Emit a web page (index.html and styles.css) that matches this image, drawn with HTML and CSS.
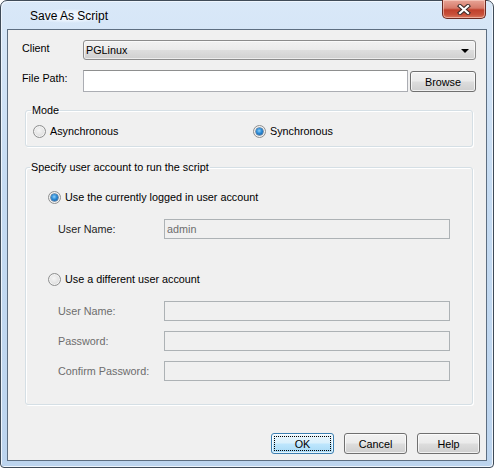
FILE: index.html
```html
<!DOCTYPE html>
<html lang="en">
<head>
    <meta charset="UTF-8">
    <title>Save As Script</title>
    <link rel="stylesheet" href="styles.css">
</head>
<body>
    <div class="window">
        <div class="titlebar">
            <span class="title">Save As Script</span>
            <button class="close-btn" aria-label="Close">
                <svg width="14" height="11" viewBox="0 0 14 11">
                    <path d="M3 2 L11 9 M11 2 L3 9" stroke="#3b2a28" stroke-width="4.2" stroke-linecap="square"/>
                    <path d="M3 2 L11 9 M11 2 L3 9" stroke="#fff" stroke-width="2.2" stroke-linecap="square"/>
                </svg>
            </button>
        </div>

        <div class="client">
            <div class="form-top">
                <label class="lbl">Client</label>
                <div class="combo">
                    <span>PGLinux</span>
                    <span class="combo-arrow"></span>
                </div>

                <label class="lbl">File Path:</label>
                <div class="path-row">
                    <input type="text" class="textbox">
                    <button class="btn browse">Browse</button>
                </div>
            </div>

            <fieldset class="group mode">
                <legend>Mode</legend>
                <div class="mode-row">
                    <label class="opt"><span class="radio"></span>Asynchronous</label>
                    <label class="opt"><span class="radio checked"></span>Synchronous</label>
                </div>
            </fieldset>

            <fieldset class="group account">
                <legend>Specify user account to run the script</legend>
                <label class="opt first"><span class="radio checked"></span>Use the currently logged in user account</label>
                <div class="field-row current">
                    <span class="flabel">User Name:</span>
                    <div class="dbox">admin</div>
                </div>

                <label class="opt second"><span class="radio"></span>Use a different user account</label>
                <div class="field-row">
                    <span class="flabel disabled">User Name:</span>
                    <div class="dbox"></div>
                </div>
                <div class="field-row">
                    <span class="flabel disabled">Password:</span>
                    <div class="dbox"></div>
                </div>
                <div class="field-row">
                    <span class="flabel disabled">Confirm Password:</span>
                    <div class="dbox"></div>
                </div>
            </fieldset>

            <div class="buttons">
                <button class="btn default"><span>OK</span></button>
                <button class="btn">Cancel</button>
                <button class="btn">Help</button>
            </div>
        </div>
    </div>
</body>
</html>
```

FILE: styles.css
```css
* {
    margin: 0;
    padding: 0;
    box-sizing: border-box;
}

body {
    width: 494px;
    height: 468px;
    background: #ffffff;
    font-family: 'Liberation Sans', Arial, sans-serif;
    font-size: 10.8px;
    color: #000;
}

/* window frame */
.window {
    width: 494px;
    height: 468px;
    border: 1px solid #3f4b58;
    border-radius: 7px 7px 4px 4px;
    background: linear-gradient(180deg, #d9e8f8 0%, #c5dbf2 40%, #bcd4ee 100%);
    box-shadow: inset 1px 1px 0 #eef5fd, inset -1px -1px 0 #eef5fd;
    display: flex;
    flex-direction: column;
}

.titlebar {
    height: 28px;
    display: flex;
    align-items: flex-start;
    padding-left: 28px;
}

.title {
    font-size: 12px;
    line-height: 14px;
    margin-top: 8px;
    color: #000;
    padding: 0 1px;
    background: radial-gradient(ellipse at center, rgba(240, 247, 255, 0.9) 40%, rgba(240, 247, 255, 0) 72%);
}

.close-btn {
    margin-left: auto;
    margin-right: 7px;
    width: 44px;
    height: 19px;
    margin-top: -1px;
    border: 1px solid #6a2b23;
    border-top: none;
    border-radius: 0 0 5px 5px;
    background: linear-gradient(180deg, #e8a597 0%, #d67a6a 45%, #c0402c 55%, #c8503a 80%, #d9785f 100%);
    box-shadow: inset 0 0 0 1px rgba(255, 220, 210, 0.55);
    display: flex;
    align-items: center;
    justify-content: center;
}

.client {
    flex: 1;
    margin: 0 6px 6px 6px;
    border: 1px solid #5d6e81;
    background: #f0f0f0;
    padding: 10px 6px 6px 14px;
    display: flex;
    flex-direction: column;
}

/* client + file path rows */
.form-top {
    display: grid;
    grid-template-columns: 61px 1fr;
    row-gap: 10px;
    margin-right: 4px;
    align-items: center;
}

.lbl {
    align-self: start;
    line-height: 14px;
    margin-top: 1px;
}

.combo {
    height: 20px;
    border: 1px solid #8c8c8c;
    border-radius: 3px;
    background: linear-gradient(180deg, #f2f2f2 0%, #ebebeb 48%, #dddddd 52%, #d0d0d0 100%);
    box-shadow: inset 0 0 0 1px rgba(255, 255, 255, 0.6);
    display: flex;
    align-items: center;
    padding: 0 6px 0 2px;
}

.combo-arrow {
    margin-left: auto;
    width: 0;
    height: 0;
    border-left: 4px solid transparent;
    border-right: 4px solid transparent;
    border-top: 4px solid #000;
    margin-top: 1px;
}

.path-row {
    display: flex;
    gap: 2px;
    height: 22px;
}

.textbox {
    flex: 1;
    height: 22px;
    border: 1px solid #abadb3;
    border-top-color: #8e8f8f;
    background: #fff;
    outline: none;
}

.btn {
    font-family: inherit;
    font-size: 10.8px;
    color: #000;
    height: 21px;
    border: 1px solid #707070;
    border-radius: 3px;
    background: linear-gradient(180deg, #f2f2f2 0%, #ebebeb 48%, #dddddd 52%, #cfcfcf 100%);
    box-shadow: inset 0 0 0 1px rgba(255, 255, 255, 0.7);
}

.browse {
    width: 66px;
    margin-top: 1px;
}

/* group boxes */
.group {
    margin: 0 7px 0 3px;
    border: 1px solid #d5dfe5;
    border-radius: 3px;
    box-shadow: inset 1px 1px 0 #fff, 1px 1px 0 #fff;
}

.group legend {
    margin-left: -2px;
    padding: 0 1px;
    line-height: 13px;
}

.mode {
    margin-top: 12px;
    padding: 7px 0 8px 7px;
}

.mode-row {
    display: grid;
    grid-template-columns: 220px 1fr;
}

.opt {
    display: flex;
    align-items: center;
    height: 14px;
    gap: 4px;
}

.radio {
    width: 13px;
    height: 13px;
    border-radius: 50%;
    border: 1px solid #8e8f8f;
    background: radial-gradient(circle at 45% 40%, #f6f6f6 0%, #e6e6e6 45%, #cfcfcf 100%);
    box-shadow: inset 0 0 0 1px #f4f4f4;
    position: relative;
    flex: none;
}

.radio.checked::after {
    content: "";
    position: absolute;
    left: 2px;
    top: 2px;
    width: 7px;
    height: 7px;
    border-radius: 50%;
    background: radial-gradient(circle at 45% 40%, #8fd0f8 0%, #2b8ad6 45%, #0b4f95 100%);
    box-shadow: 0 0 0 0.5px #1c4a78;
}

.account {
    margin-top: 14px;
    padding: 0 22px 23px 22px;
    display: flex;
    flex-direction: column;
}

.account legend {
    margin-left: -18px;
}

.account .first {
    margin-top: 16px;
}

.account .second {
    margin-top: 33px;
}

.field-row {
    display: flex;
    align-items: center;
    height: 20px;
    margin-top: 10px;
    padding-left: 10px;
}

.field-row.current {
    margin-top: 15px;
}

.second + .field-row {
    margin-top: 15px;
}

.flabel {
    width: 106px;
    color: #1e1e1e;
}

.flabel.disabled {
    color: #6d6d6d;
}

.dbox {
    width: 286px;
    height: 20px;
    border: 1px solid #adb2b5;
    background: #f0f0f0;
    color: #6d6d6d;
    padding-left: 2px;
    line-height: 18px;
}

/* bottom buttons */
.buttons {
    margin-top: auto;
    display: flex;
    justify-content: flex-end;
    gap: 10px;
}

.buttons .btn {
    width: 63px;
}

.btn.default {
    border-color: #3c7fb1;
    background: linear-gradient(180deg, #eaf6fd 0%, #d9f0fc 48%, #bee6fd 52%, #a7d9f5 100%);
    padding: 2px;
}

.btn.default span {
    display: flex;
    align-items: center;
    justify-content: center;
    height: 100%;
    border: 1px dotted #000;
}
```
